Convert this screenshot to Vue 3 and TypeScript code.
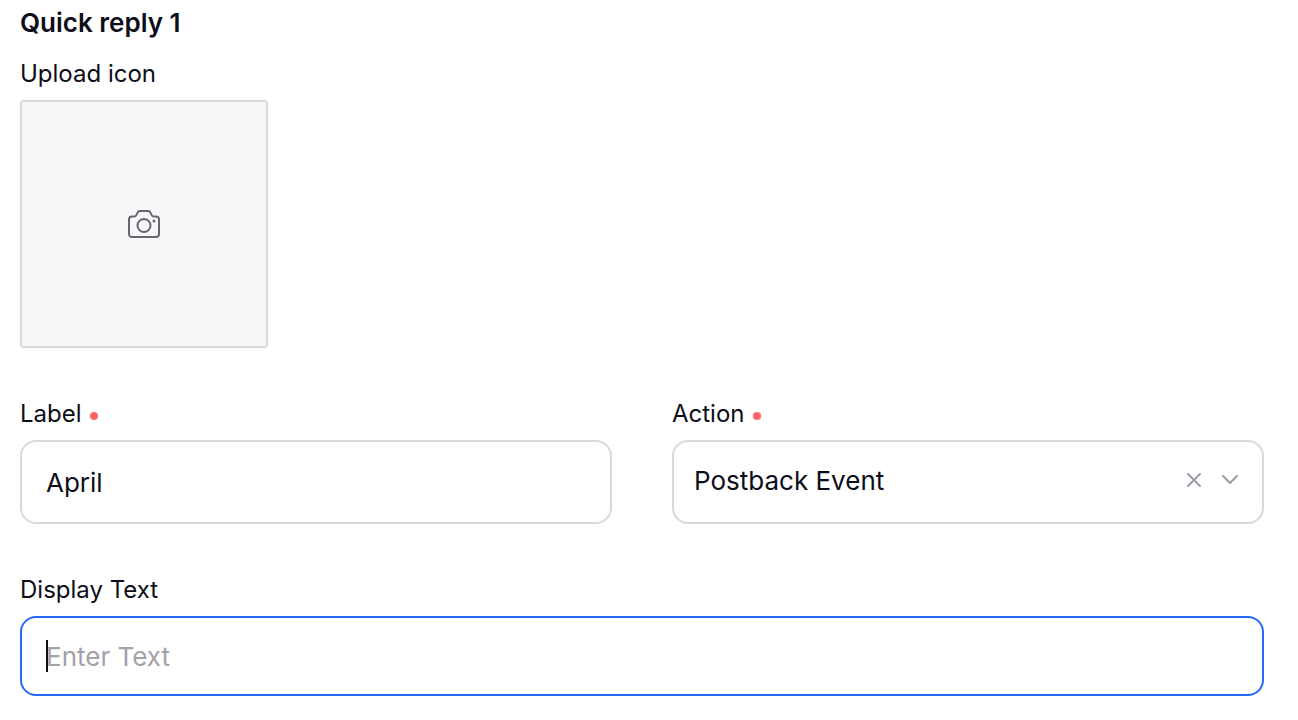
<script setup lang="ts">
import { ref } from 'vue'

const label = ref('April')
const action = ref('postback')
const displayText = ref('')
</script>

<template>
  <form class="quick-reply" @submit.prevent>
    <div class="section">
      <h2 class="title">Quick reply 1</h2>
      <div class="field">
        <span id="upload-label" class="caption">Upload icon</span>
        <button type="button" class="upload" aria-labelledby="upload-label">
          <svg class="camera" viewBox="0 0 32 28" aria-hidden="true">
            <path
              d="M4 6.5H6.4C7.1 6.5 7.7 6.2 8 5.6L9.8 2.2C10.1 1.4 10.7 1 11.5 1H20.5C21.3 1 21.9 1.4 22.2 2.2L24 5.6C24.3 6.2 24.9 6.5 25.6 6.5H28C29.8 6.5 31 7.7 31 9.4V24C31 25.8 29.8 27 28 27H4C2.2 27 1 25.8 1 24V9.4C1 7.7 2.2 6.5 4 6.5Z"
            />
            <circle cx="16" cy="15.5" r="6.5" />
            <circle class="dot" cx="26" cy="11" r="1.5" />
          </svg>
        </button>
      </div>
    </div>

    <div class="row">
      <div class="field">
        <label class="caption required" for="label">Label</label>
        <input id="label" v-model="label" class="control" type="text" required />
      </div>
      <div class="field">
        <label class="caption required" for="action">Action</label>
        <div class="wrap">
          <select id="action" v-model="action" class="control select" required>
            <option value="postback">Postback Event</option>
          </select>
          <button type="button" class="clear" aria-label="Clear action" @click="action = ''">
            <svg viewBox="0 0 16 16" aria-hidden="true"><path d="M2 2L14 14M14 2L2 14" /></svg>
          </button>
          <svg class="chevron" viewBox="0 0 16 16" aria-hidden="true"><path d="M1 4L8 11L15 4" /></svg>
        </div>
      </div>
    </div>

    <div class="field">
      <label class="caption" for="display-text">Display Text</label>
      <div class="wrap">
        <input
          id="display-text"
          v-model="displayText"
          class="control active"
          type="text"
          placeholder="Enter Text"
        />
        <span v-if="!displayText" class="caret" aria-hidden="true"></span>
      </div>
    </div>
  </form>
</template>

<style>
body {
  background: #fff;
}
</style>

<style scoped>
.quick-reply {
  box-sizing: border-box;
  display: flex;
  flex-direction: column;
  gap: 50px;
  padding: 7px 34px 24px 20px;
  color: #0d0d1a;
  font-family: Inter, "Liberation Sans", sans-serif;
}
.section {
  display: flex;
  flex-direction: column;
  gap: 19px;
}
.title {
  margin: 0;
  font-size: 26px;
  font-weight: 600;
  line-height: 32px;
}
.field {
  display: flex;
  flex-direction: column;
  gap: 10px;
  min-width: 0;
}
.caption {
  display: flex;
  align-items: center;
  gap: 8px;
  font-size: 24px;
  line-height: 32px;
}
.required::after {
  content: "";
  width: 8px;
  height: 8px;
  margin-top: 4px;
  border-radius: 50%;
  background: #ff6467;
}
.upload {
  display: flex;
  align-items: center;
  justify-content: center;
  width: 248px;
  height: 248px;
  padding: 0;
  border: 2px solid #d9d9db;
  border-radius: 4px;
  background: #f8f8fb;
}
.camera {
  width: 32px;
  height: 28px;
  fill: none;
  stroke: #676473;
  stroke-width: 2;
}
.camera .dot {
  fill: #676473;
  stroke: none;
}
.row {
  display: grid;
  grid-template-columns: 1fr 1fr;
  gap: 60px;
}
.wrap {
  position: relative;
}
.control {
  box-sizing: border-box;
  display: block;
  width: 100%;
  height: 84px;
  margin: 0;
  padding: 0 24px;
  border: 2px solid #d9d9d9;
  border-radius: 16px;
  outline: none;
  background: #fff;
  color: inherit;
  font-family: inherit;
  font-size: 26px;
}
.control::placeholder {
  color: #a3a1aa;
  opacity: 1;
}
.select {
  appearance: none;
  padding: 0 100px 4px 20px;
}
.active {
  height: 80px;
  border-color: #2469f6;
}
.clear {
  position: absolute;
  top: 32px;
  right: 62px;
  width: 16px;
  height: 16px;
  padding: 0;
  border: 0;
  background: none;
}
.clear svg,
.chevron {
  display: block;
  width: 16px;
  height: 16px;
  fill: none;
  stroke: #9d9ba5;
  stroke-width: 2;
  stroke-linecap: round;
  stroke-linejoin: round;
}
.chevron {
  position: absolute;
  top: 32px;
  right: 26px;
  pointer-events: none;
}
.caret {
  position: absolute;
  top: 24px;
  left: 26px;
  width: 2px;
  height: 32px;
  background: #0d0d1a;
}
</style>
